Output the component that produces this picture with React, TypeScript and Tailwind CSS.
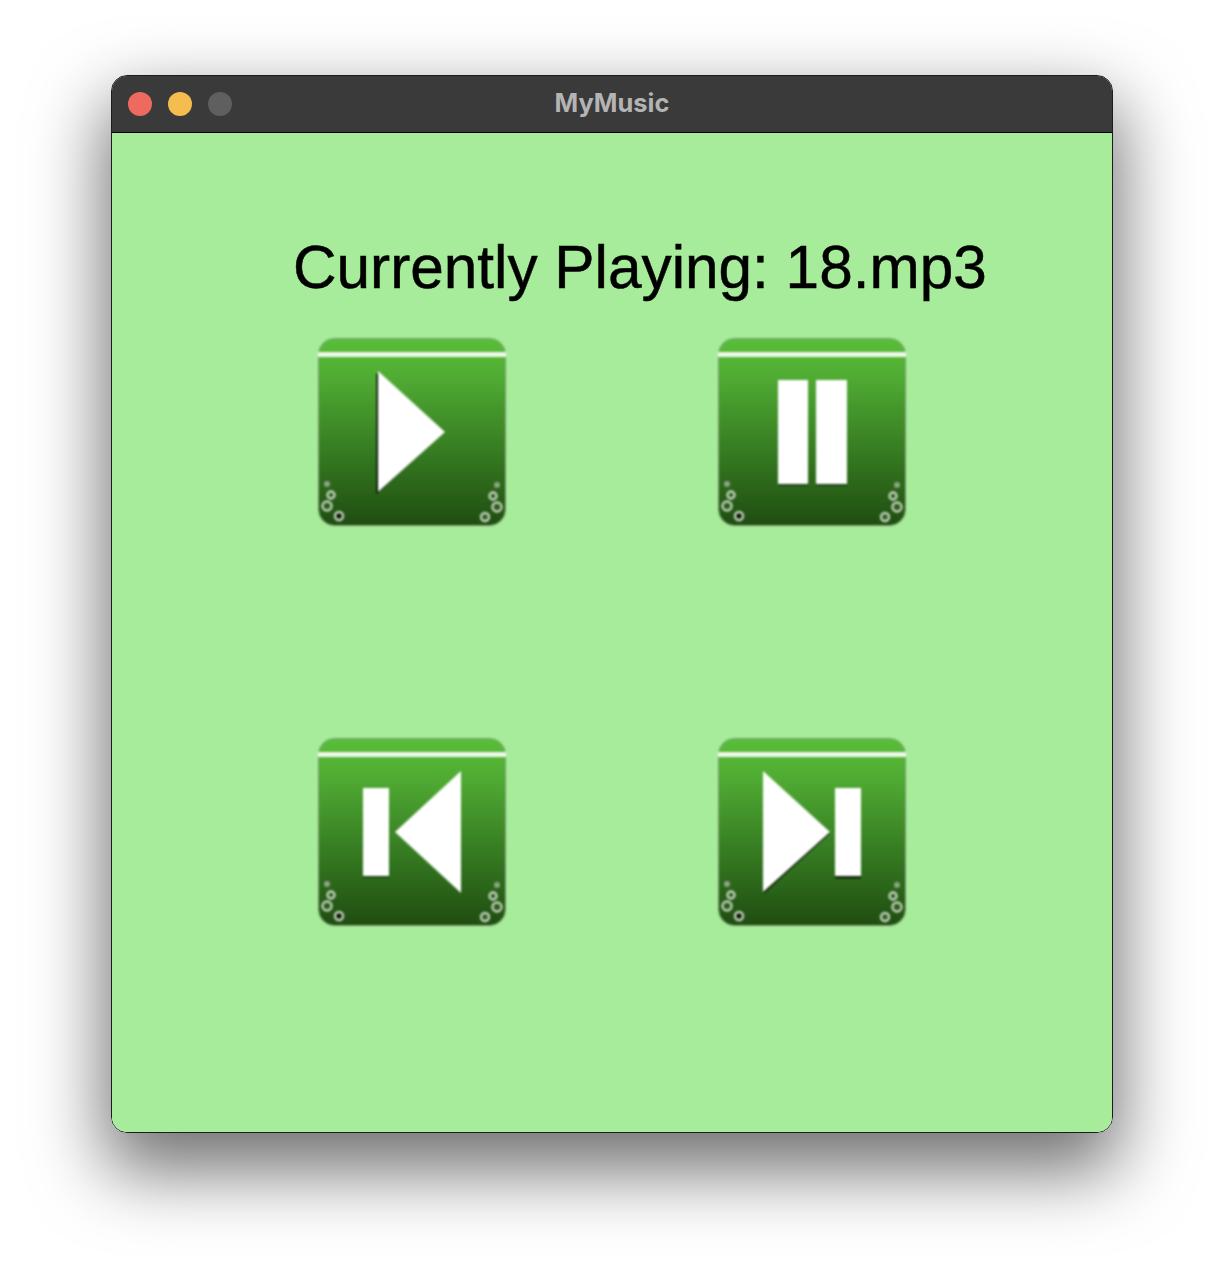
import React from "react";

type Kind = "play" | "pause" | "prev" | "next";

function Ring({ x, y, r, dark }: { x: number; y: number; r: number; dark?: boolean }) {
  return (
    <g>
      <circle cx={x} cy={y} r={r} fill={dark ? "#10240a" : "#2b5f1a"} stroke="#c4d0be" strokeWidth={2.4} />
      {dark ? <circle cx={x} cy={y} r={1.5} fill="#000" /> : null}
    </g>
  );
}

function Glyph({ kind }: { kind: Kind }) {
  const w = "#ffffff";
  if (kind === "play") {
    return (
      <g>
        <polygon points="58.5,35 58.5,156 125,95" fill="#000" />
        <polygon points="60,33 60,154 127,94" fill={w} />
      </g>
    );
  }
  if (kind === "pause") {
    return (
      <g>
        <rect x={60} y={43.5} width={30} height={104} fill="#1a3a10" />
        <rect x={98} y={43.5} width={31} height={104} fill="#1a3a10" />
        <rect x={60} y={42} width={30} height={104} fill={w} />
        <rect x={98} y={42} width={31} height={104} fill={w} />
      </g>
    );
  }
  if (kind === "prev") {
    return (
      <g>
        <rect x={45} y={51.5} width={26} height={88} fill="#1a3a10" />
        <rect x={45} y={50} width={26} height={88} fill={w} />
        <polygon points="143,33 143,155 77,94" fill={w} />
      </g>
    );
  }
  return (
    <g>
      <polygon points="45.5,35 45.5,156 112,95.5" fill="#10240a" />
      <polygon points="45,33 45,154 112,94" fill={w} />
      <rect x={117} y={51.5} width={26} height={89} fill="#10240a" />
      <rect x={117} y={50} width={26} height={88} fill={w} />
    </g>
  );
}

function PlayerButton({ kind }: { kind: Kind }) {
  const id = `grad-${kind}`;
  return (
    <button className="w-[188px] h-[188px] block">
      <svg viewBox="0 0 188 188" width={188} height={188} className="blur-[0.8px] overflow-visible">
        <defs>
          <linearGradient id={id} x1="0" y1="0" x2="0" y2="1">
            <stop offset="0" stopColor="#58be38" />
            <stop offset="0.2" stopColor="#50ac33" />
            <stop offset="0.6" stopColor="#367c22" />
            <stop offset="1" stopColor="#1f4d11" />
          </linearGradient>
        </defs>
        <rect x={0.5} y={0.5} width={187} height={187} rx={16} fill={`url(#${id})`} stroke="#7f9a78" strokeWidth={1} />
        <rect x={0} y={14} width={188} height={5} fill="#f0f8ec" />
        <Glyph kind={kind} />
        <circle cx={9} cy={146} r={3} fill="#8fa388" />
        <Ring x={13} y={157} r={3.5} />
        <Ring x={9} y={168} r={4.5} />
        <Ring x={21} y={178} r={4} dark />
        <circle cx={179} cy={147} r={3} fill="#8fa388" />
        <Ring x={175} y={158} r={3.5} />
        <Ring x={179} y={169} r={4.5} />
        <Ring x={167} y={179} r={4} />
      </svg>
    </button>
  );
}

export default function App() {
  return (
    <div className="w-[1224px] h-[1280px] bg-white pt-[75px] pl-[111px] overflow-hidden">
      <div className="w-[1002px] h-[1058px] rounded-[16px] border border-[#1c1c1c] overflow-hidden flex flex-col shadow-[0_32px_72px_6px_rgba(0,0,0,0.56)]">
        <div className="relative h-[57px] shrink-0 bg-[#3a3a3a] border-b border-black flex items-center pl-[16px] gap-[16px]">
          <span className="w-[24px] h-[24px] rounded-full bg-[#ee6a5f]" />
          <span className="w-[24px] h-[24px] rounded-full bg-[#f5bd4f]" />
          <span className="w-[24px] h-[24px] rounded-full bg-[#5f5f5f]" />
          <span className="absolute inset-x-0 top-0 text-center text-[25.4px] leading-[54px] font-bold text-[#b4b4b4] font-['Inter',sans-serif]">
            MyMusic
          </span>
        </div>
        <div className="flex-1 bg-[#a7ec9a] pt-[99px] pl-[206px]">
          <h1 className="ml-[-25px] text-[60.3px] leading-[70px] font-normal text-black whitespace-nowrap blur-[0.7px] [-webkit-text-stroke:0.5px_black] font-['Liberation_Sans',Arial,sans-serif]">
            Currently Playing: 18.mp3
          </h1>
          <div className="grid grid-cols-[188px_188px] gap-x-[212px] gap-y-[212px] mt-[36px]">
            <PlayerButton kind="play" />
            <PlayerButton kind="pause" />
            <PlayerButton kind="prev" />
            <PlayerButton kind="next" />
          </div>
        </div>
      </div>
    </div>
  );
}
